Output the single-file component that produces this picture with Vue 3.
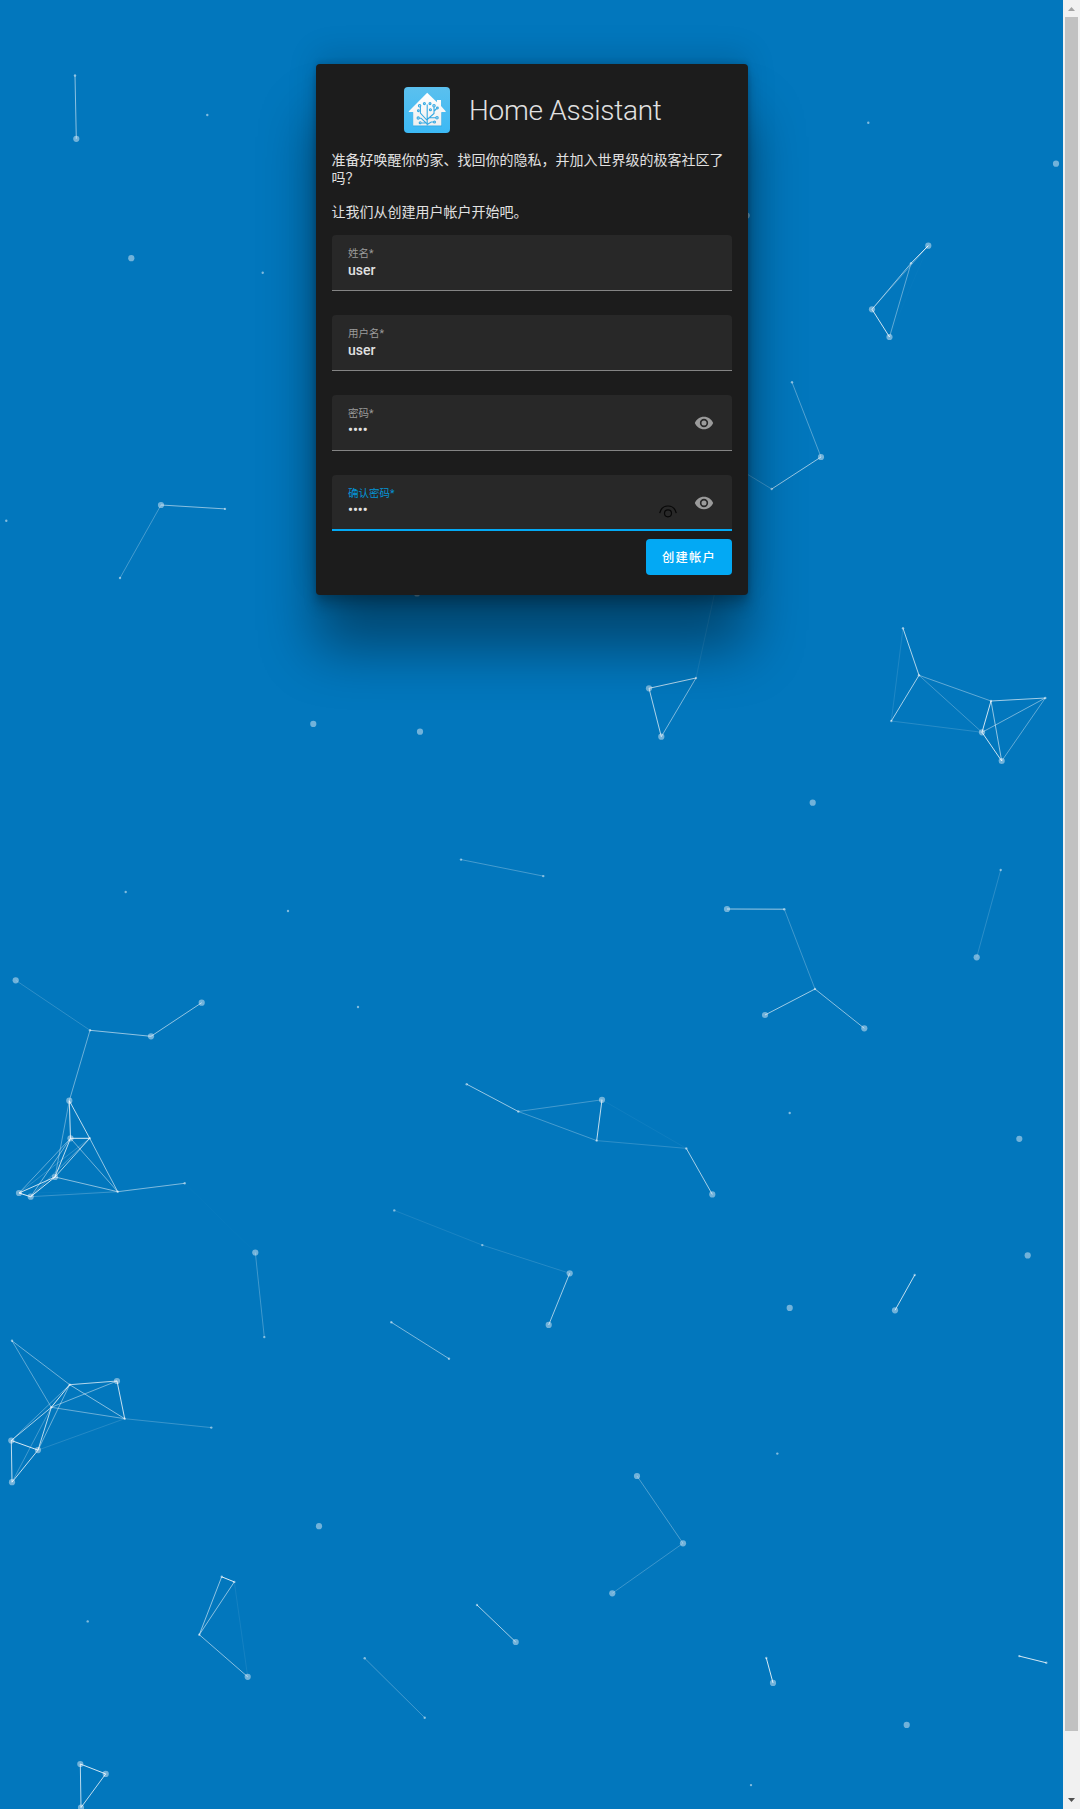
<script setup>
import { ref } from 'vue'

const fields = ref([
  { label: '姓名*', value: 'user' },
  { label: '用户名*', value: 'user' },
  { label: '密码*', value: '••••', secret: true },
  { label: '确认密码*', value: '••••', secret: true, focused: true },
])

// Particle centres: [x, y]
const big = [
  [76.3, 138.8], [131.3, 258.2], [161, 505], [1056, 163.7], [746.7, 215.5], [928.3, 245.7],
  [872, 309.3], [889.5, 337], [821, 457], [649, 688.3], [661.3, 736.7], [982, 732.3],
  [1001.7, 761], [812.7, 802.7], [976.7, 957.3], [727, 909], [765, 1015], [864.3, 1028.3],
  [15.7, 980.3], [151, 1036.3], [201.7, 1002.7], [69.3, 1100.7], [70.5, 1138.3], [55, 1177],
  [19, 1193], [30.7, 1196.7], [417, 593.5], [313.3, 723.9], [420, 731.7], [602, 1099.8],
  [712.3, 1194.4], [569.7, 1273.3], [548.7, 1324.9], [255.3, 1252.5], [117, 1381],
  [11.3, 1440.5], [38, 1450.1], [12, 1482.2], [319, 1526.2], [247.7, 1676.8], [80.3, 1764],
  [105.7, 1773.9], [81, 1807.5], [637, 1476], [683, 1543.3], [612.3, 1593.3], [515.7, 1642],
  [1019.3, 1138.8], [1027.7, 1255.4], [789.7, 1307.9], [895, 1310.3], [773, 1682.9],
  [906.7, 1724.9],
]
const small = [
  [75, 75.5], [207.3, 115], [262.7, 272.8], [225, 508.9], [120, 578], [6.3, 520.8],
  [868.3, 122.7], [911, 263.3], [792, 382.3], [771.7, 489], [697.5, 444], [696, 678],
  [716.4, 585], [903, 628.3], [919, 675.3], [891.3, 721], [991, 701], [1045.3, 698],
  [1000.7, 870], [784.3, 909.2], [815, 989], [125.7, 892], [288, 911], [90, 1030.3],
  [89.7, 1138.3], [117.7, 1191.7], [184.7, 1183.3], [461, 859.6], [543.3, 876.1],
  [358, 1007], [466.7, 1084.2], [518.3, 1111.5], [596.7, 1140.6], [686.3, 1148.4],
  [394.3, 1210.4], [482.3, 1245.1], [391.3, 1322.3], [449, 1358.7], [264.3, 1337.1],
  [12, 1340.8], [69.7, 1384.7], [51.3, 1407.3], [124.7, 1418.7], [211.3, 1427.6],
  [221.7, 1576.8], [234.3, 1581.9], [199.3, 1634.7], [87.7, 1621.4], [477, 1605],
  [364.7, 1658.3], [424.7, 1717.7], [789.7, 1113], [914.7, 1275], [777.3, 1453.6],
  [766.3, 1658], [1019.3, 1656.1], [1046.3, 1662.8], [751, 1785.1],
]

// Neighbouring particles are linked; links fade out as the distance reaches the reach.
const REACH = 100
const all = [...big, ...small]
const links = []
for (let i = 0; i < all.length; i++) {
  for (let j = i + 1; j < all.length; j++) {
    const d = Math.hypot(all[i][0] - all[j][0], all[i][1] - all[j][1])
    if (d < REACH) links.push({ a: all[i], b: all[j], o: 0.9 * (1 - (d / REACH) ** 2) })
  }
}
</script>

<template>
  <div class="screen" lang="zh-CN">
    <div class="page">
      <svg class="particles" width="1063" height="1809" viewBox="0 0 1063 1809">
        <circle v-for="(p, i) in big" :key="'b' + i" :cx="p[0]" :cy="p[1]" r="3.1" fill="#fff" fill-opacity=".44" />
        <circle v-for="(p, i) in small" :key="'s' + i" :cx="p[0]" :cy="p[1]" r="1.2" fill="#fff" fill-opacity=".5" />
        <line v-for="(l, i) in links" :key="'l' + i" :x1="l.a[0]" :y1="l.a[1]" :x2="l.b[0]" :y2="l.b[1]" stroke="#fff" :stroke-opacity="l.o" />
      </svg>

      <main class="card">
        <header class="header">
          <svg class="logo" viewBox="0 0 46 46">
            <defs>
              <linearGradient id="sky" x1="0" y1="0" x2="0" y2="1">
                <stop offset="0" stop-color="#5bc0ee" />
                <stop offset="1" stop-color="#3cb9f5" />
              </linearGradient>
              <linearGradient id="wall" x1="0" y1="0" x2="0" y2="1">
                <stop offset="0" stop-color="#fff" />
                <stop offset="1" stop-color="#efefef" />
              </linearGradient>
            </defs>
            <rect width="46" height="46" rx="4" fill="url(#sky)" />
            <path d="M9 39.5h29V26H9z" fill="#1d8fc9" opacity=".35" />
            <path d="M23.2 5.8 33 15.2V13h4v6l4.7 5.2q.4.8-.6.8H37.3v13.5H9.2V25H5.3q-1-.1-.5-.8z" fill="url(#wall)" />
            <g fill="none" stroke="#35a9e3" stroke-width="1.1">
              <path d="M23.2 38.5V17.500M23.200 33.500l-6.800-7.500v-6M23.200 37l-6.200-5.800h-1.800M22.500 36h-5M23.200 32.500l6.800-6v-6.500M25.500 30.800h6.500M23.200 37.500l4-2.500h2.500M29.800 24.500l2.800-3" />
              <circle cx="15.6" cy="18.8" r="1.2" /><circle cx="20.4" cy="16.6" r="1" /><circle cx="26" cy="16.6" r="1" />
              <circle cx="30" cy="18.8" r="1.2" /><circle cx="33.4" cy="21" r=".9" /><circle cx="14.4" cy="23.7" r=".9" />
              <circle cx="26.4" cy="22.8" r="1" /><circle cx="14.2" cy="31" r="1.1" /><circle cx="16.2" cy="35.8" r="1" />
              <circle cx="33" cy="30.8" r="1.2" /><circle cx="30.5" cy="35" r="1" />
            </g>
          </svg>
          <h1>Home Assistant</h1>
        </header>

        <p>准备好唤醒你的家、找回你的隐私，并加入世界级的极客社区了吗？</p>
        <p>让我们从创建用户帐户开始吧。</p>

        <form class="form" @submit.prevent>
          <div v-for="f in fields" :key="f.label" class="field" :class="{ focused: f.focused }">
            <div class="text">
              <span class="label">{{ f.label }}</span>
              <span class="value">{{ f.value }}</span>
            </div>
            <svg v-if="f.focused" class="reveal" viewBox="0 0 18 13" fill="none" stroke="#080808" stroke-width="1.2">
              <path d="M.7 8.2C1.8 3.5 5 1 9 1s7.2 2.5 8.3 7.2" />
              <circle cx="9" cy="8.3" r="3.5" />
            </svg>
            <svg v-if="f.secret" class="eye" viewBox="0 0 24 24">
              <path d="M12,9A3,3 0 0,0 9,12A3,3 0 0,0 12,15A3,3 0 0,0 15,12A3,3 0 0,0 12,9M12,17A5,5 0 0,1 7,12A5,5 0 0,1 12,7A5,5 0 0,1 17,12A5,5 0 0,1 12,17M12,4.5C7,4.5 2.73,7.61 1,12C2.73,16.39 7,19.5 12,19.5C17,19.5 21.27,16.39 23,12C21.27,7.61 17,4.5 12,4.5Z" />
            </svg>
          </div>
          <button class="submit" type="submit">创建帐户</button>
        </form>
      </main>
    </div>

    <div class="scrollbar">
      <svg width="17" height="17" viewBox="0 0 17 17"><path d="M5 11h7L8.5 7z" fill="#a3a3a3" /></svg>
      <div class="thumb"></div>
      <svg width="17" height="17" viewBox="0 0 17 17"><path d="M5 6h7L8.5 10z" fill="#505050" /></svg>
    </div>
  </div>
</template>

<style>
body {
  margin: 0;
  background: #0277bd;
}
</style>

<style scoped>
.screen {
  display: flex;
  width: 1080px;
  height: 1809px;
  overflow: hidden;
  font-family: Roboto, "Noto Sans CJK SC", sans-serif;
  font-size: 14px;
  color: #e1e1e1;
}
.page {
  position: relative;
  flex: 1;
  background: #0277bd;
}
.particles {
  position: absolute;
  inset: 0;
}
.card {
  position: relative;
  box-sizing: border-box;
  width: 432px;
  height: 531px;
  margin: 64px 0 0 316px;
  padding: 23px 16px 20px;
  border-radius: 4px;
  background: #1c1c1c;
  box-shadow: rgba(0, 0, 0, 0.4) 0 54px 55px, rgba(0, 0, 0, 0.12) 0 -12px 30px,
    rgba(0, 0, 0, 0.12) 0 4px 6px, rgba(0, 0, 0, 0.17) 0 12px 13px,
    rgba(0, 0, 0, 0.09) 0 -3px 5px;
}
.header {
  display: flex;
  align-items: center;
  height: 46px;
  margin-bottom: 17.5px;
  padding-left: 72px;
}
.logo {
  flex: none;
  width: 46px;
  height: 46px;
  margin-right: 19px;
}
h1 {
  margin: 2px 0 0;
  font-size: 28px;
  font-weight: 300;
  line-height: 40px;
  letter-spacing: -0.28px;
  white-space: nowrap;
}
p {
  margin: 0 0 15px -0.6px;
  line-height: 18.5px;
}
.form {
  display: flex;
  flex-direction: column;
  margin-top: -1px;
}
.field {
  display: flex;
  box-sizing: border-box;
  height: 56px;
  margin-bottom: 24px;
  padding: 0 18px 0 16px;
  border-bottom: 1px solid #848484;
  border-radius: 4px 4px 0 0;
  background: #282828;
}
.field.focused {
  margin-bottom: 8px;
  border-bottom: 2px solid #03a9f4;
}
.text {
  display: flex;
  flex: 1;
  flex-direction: column;
  padding-top: 12px;
}
.label {
  height: 13px;
  font-size: 10.5px;
  line-height: 14px;
  color: #9b9b9b;
}
.focused .label {
  color: #0494d6;
}
.value {
  font-weight: 500;
  line-height: 20px;
}
.eye {
  width: 20px;
  height: 20px;
  margin-top: 18px;
  fill: #9b9b9b;
}
.reveal {
  width: 18px;
  height: 13px;
  margin: 30px 17px 0 0;
}
.submit {
  align-self: flex-end;
  width: 86px;
  height: 36px;
  padding: 2px 0 0;
  border: 0;
  border-radius: 4px;
  background: #03a9f4;
  color: #fff;
  font: 500 12.25px/34px Roboto, "Noto Sans CJK SC", sans-serif;
  letter-spacing: 1.25px;
}
.scrollbar {
  display: flex;
  flex-direction: column;
  width: 17px;
  background: #f1f1f1;
}
.scrollbar svg {
  display: block;
}
.scrollbar svg:last-child {
  margin-top: auto;
}
.thumb {
  width: 13px;
  height: 1714px;
  margin-left: 2px;
  background: #c1c1c1;
}
</style>
